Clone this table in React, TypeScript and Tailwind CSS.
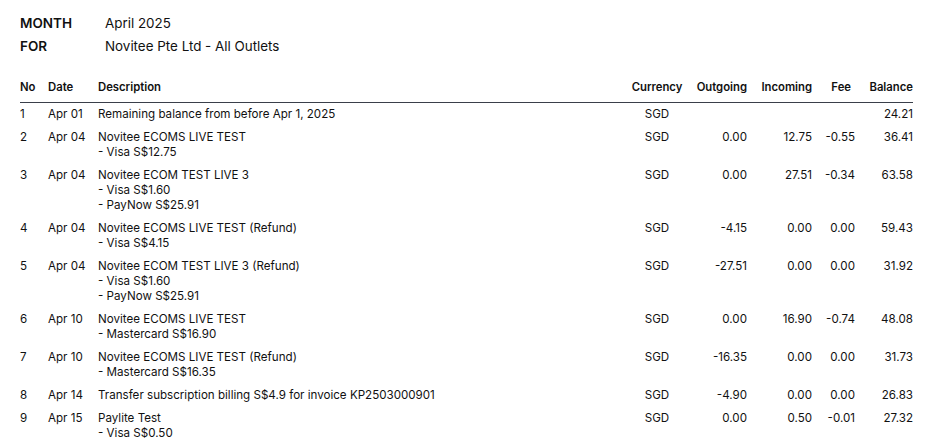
import React from "react";

type Row = {
  no: number;
  date: string;
  desc: string;
  subs: string[];
  out: string;
  inc: string;
  fee: string;
  bal: string;
};

const rows: Row[] = [
  { no: 1, date: "Apr 01", desc: "Remaining balance from before Apr 1, 2025", subs: [], out: "", inc: "", fee: "", bal: "24.21" },
  { no: 2, date: "Apr 04", desc: "Novitee ECOMS LIVE TEST", subs: ["- Visa S$12.75"], out: "0.00", inc: "12.75", fee: "-0.55", bal: "36.41" },
  { no: 3, date: "Apr 04", desc: "Novitee ECOM TEST LIVE 3", subs: ["- Visa S$1.60", "- PayNow S$25.91"], out: "0.00", inc: "27.51", fee: "-0.34", bal: "63.58" },
  { no: 4, date: "Apr 04", desc: "Novitee ECOMS LIVE TEST (Refund)", subs: ["- Visa S$4.15"], out: "-4.15", inc: "0.00", fee: "0.00", bal: "59.43" },
  { no: 5, date: "Apr 04", desc: "Novitee ECOM TEST LIVE 3 (Refund)", subs: ["- Visa S$1.60", "- PayNow S$25.91"], out: "-27.51", inc: "0.00", fee: "0.00", bal: "31.92" },
  { no: 6, date: "Apr 10", desc: "Novitee ECOMS LIVE TEST", subs: ["- Mastercard S$16.90"], out: "0.00", inc: "16.90", fee: "-0.74", bal: "48.08" },
  { no: 7, date: "Apr 10", desc: "Novitee ECOMS LIVE TEST (Refund)", subs: ["- Mastercard S$16.35"], out: "-16.35", inc: "0.00", fee: "0.00", bal: "31.73" },
  { no: 8, date: "Apr 14", desc: "Transfer subscription billing S$4.9 for invoice KP2503000901", subs: [], out: "-4.90", inc: "0.00", fee: "0.00", bal: "26.83" },
  { no: 9, date: "Apr 15", desc: "Paylite Test", subs: ["- Visa S$0.50"], out: "0.00", inc: "0.50", fee: "-0.01", bal: "27.32" },
];

export default function App() {
  return (
    <div
      className="min-h-[447px] w-[934px] bg-white px-5 pt-3 text-[#111111]"
      style={{ fontFamily: "Inter, 'Liberation Sans', sans-serif" }}
    >
      <div className="text-[13.4px] leading-[23px]">
        <div className="flex">
          <div className="w-[85px] text-[13.5px] font-semibold">MONTH</div>
          <div>April 2025</div>
        </div>
        <div className="flex">
          <div className="w-[85px] text-[13.5px] font-semibold">FOR</div>
          <div>Novitee Pte Ltd - All Outlets</div>
        </div>
      </div>

      <table className="mt-[14px] w-[893px] table-fixed border-collapse text-[11.6px] leading-[15px]">
        <colgroup>
          <col className="w-[28px]" />
          <col className="w-[50px]" />
          <col className="w-[526px]" />
          <col className="w-[66px]" />
          <col className="w-[57px]" />
          <col className="w-[65px]" />
          <col className="w-[43px]" />
          <col className="w-[58px]" />
        </colgroup>
        <thead>
          <tr className="border-b border-[#3a3f4a] text-[11.3px]">
            <th className="pt-2 pb-[7px] text-left font-semibold">No</th>
            <th className="pt-2 pb-[7px] text-left font-semibold">Date</th>
            <th className="pt-2 pb-[7px] text-left font-semibold">Description</th>
            <th className="pt-2 pb-[7px] text-center font-semibold">Currency</th>
            <th className="pt-2 pb-[7px] text-right font-semibold">Outgoing</th>
            <th className="pt-2 pb-[7px] text-right font-semibold">Incoming</th>
            <th className="pt-2 pb-[7px] pr-[4px] text-right font-semibold">Fee</th>
            <th className="pt-2 pb-[7px] text-right font-semibold">Balance</th>
          </tr>
        </thead>
        <tbody>
          {rows.map((r) => (
            <tr key={r.no} className="align-top">
              <td className="py-1">{r.no}</td>
              <td className="py-1">{r.date}</td>
              <td className="py-1">
                <div>{r.desc}</div>
                {r.subs.map((s) => (
                  <div key={s}>{s}</div>
                ))}
              </td>
              <td className="py-1 text-center">SGD</td>
              <td className="py-1 text-right">{r.out}</td>
              <td className="py-1 text-right">{r.inc}</td>
              <td className="py-1 text-right">{r.fee}</td>
              <td className="py-1 text-right">{r.bal}</td>
            </tr>
          ))}
        </tbody>
      </table>
    </div>
  );
}
